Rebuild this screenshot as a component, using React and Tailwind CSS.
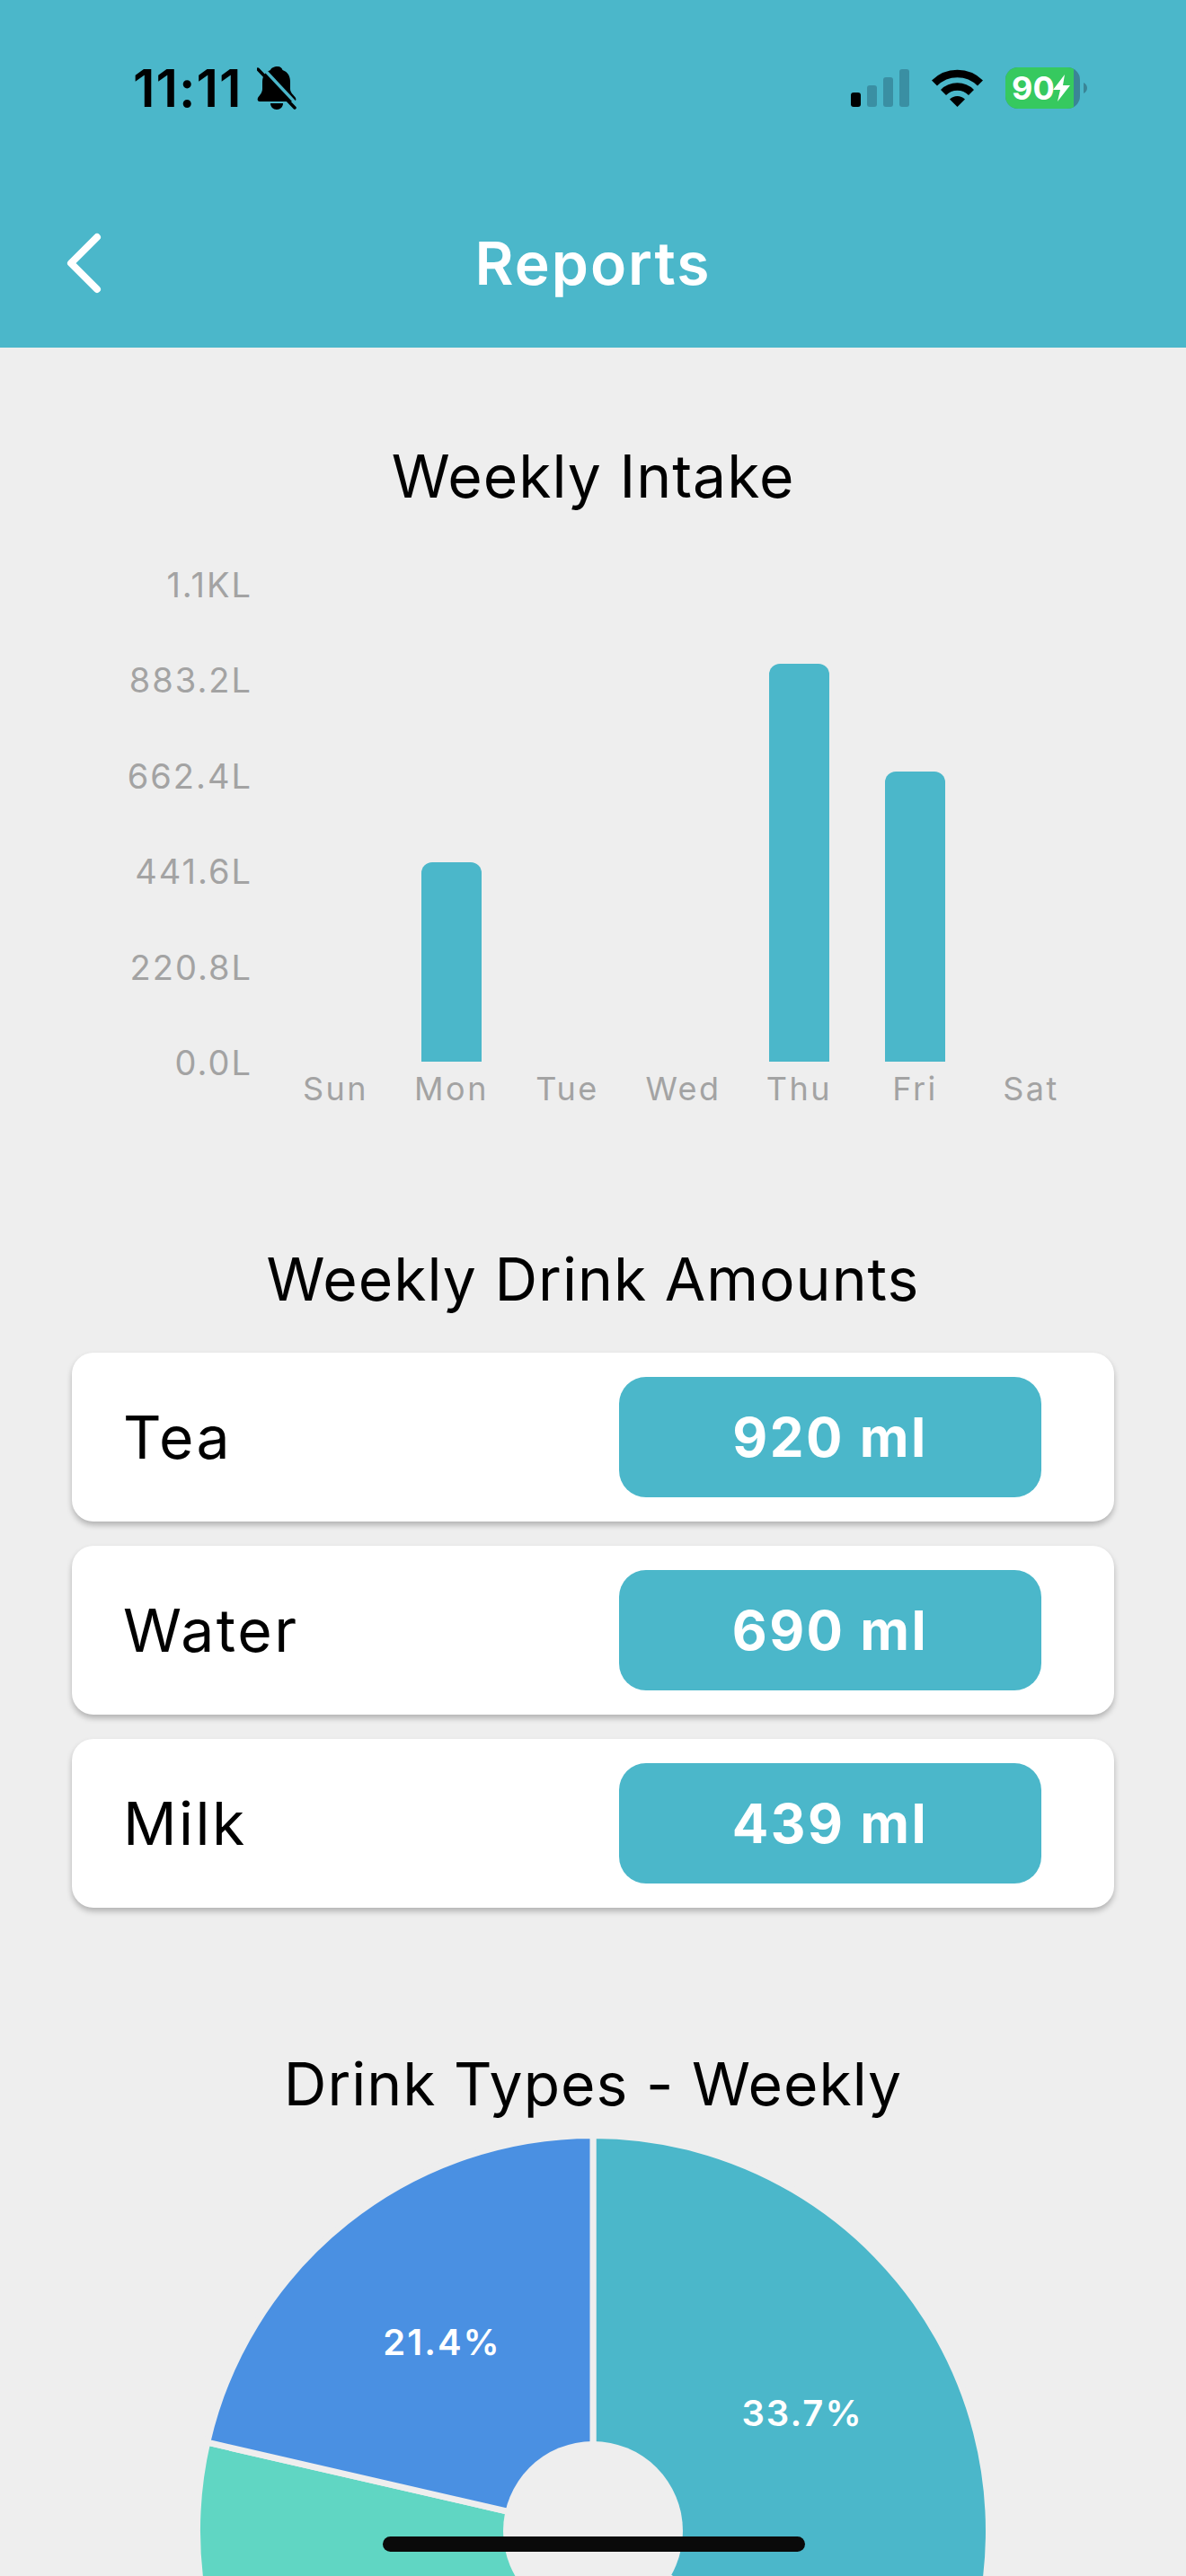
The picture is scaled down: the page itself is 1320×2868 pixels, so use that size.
import React from "react";

const R = 440.5;
function polar(a, r) {
  const t = (a * Math.PI) / 180;
  return [440 + r * Math.sin(t), 437 - r * Math.cos(t)];
}
function slice(a0, a1) {
  const [x0, y0] = polar(a0, R);
  const [x1, y1] = polar(a1, R);
  return `M440 437 L${x0} ${y0} A${R} ${R} 0 ${a1 - a0 > 180 ? 1 : 0} 1 ${x1} ${y1} Z`;
}

const yLabels = ["1.1KL", "883.2L", "662.4L", "441.6L", "220.8L", "0.0L"];
const days = [
  ["Sun", 0], ["Mon", 222], ["Tue", 0], ["Wed", 0], ["Thu", 443], ["Fri", 323], ["Sat", 0],
];
const drinks = [["Tea", "920 ml"], ["Water", "690 ml"], ["Milk", "439 ml"]];

function Bell() {
  return (
    <svg width="44" height="48" viewBox="0 0 44 48" className="ml-[16px] shrink-0">
      <path d="M23 0c3 0 5 2 5.5 4c6 2 8.500 7 8.500 13v8c0 4 4 7 6 10c1 2 0 4-2 4H3c-2 0-3-2-2-4c2-3 5-6 5-10v-8c0-6 3-11 9-13c.5-2 4-4 8-4z" fill="#000" />
      <path d="M15 41h14c0 4-3 7-7 7s-7-3-7-7z" fill="#000" />
      <path d="M4 -1L47 45" stroke="#4bb7ca" strokeWidth="3.500" />
      <path d="M1 3L42 46" stroke="#000" strokeWidth="3.500" strokeLinecap="round" />
    </svg>
  );
}

function Signal() {
  return (
    <div className="flex items-end gap-[7px] h-[42px]">
      <div className="w-[11px] h-[16px] rounded-[3px] bg-black" />
      <div className="w-[11px] h-[24px] rounded-[3px] bg-[#3a8fa3]" />
      <div className="w-[11px] h-[33px] rounded-[3px] bg-[#3a8fa3]" />
      <div className="w-[11px] h-[42px] rounded-[3px] bg-[#3a8fa3]" />
    </div>
  );
}

function Wifi() {
  return (
    <svg width="57" height="42" viewBox="0 0 57 42" className="ml-[25px]">
      <path d="M3 15.500A36 36 0 0 1 54 15.500" fill="none" stroke="#000" strokeWidth="8.500" />
      <path d="M13 26A22 22 0 0 1 44 26" fill="none" stroke="#000" strokeWidth="8.500" />
      <path d="M20 33.500A12 12 0 0 1 37 33.500L28.500 42Z" fill="#000" />
    </svg>
  );
}

function Battery() {
  return (
    <div className="ml-[25px] flex items-center gap-[4px]">
      <div className="w-[83px] h-[46px] rounded-[14px] bg-[#3a8596] overflow-hidden">
        <div className="w-[76px] h-full bg-[#36c95f] flex items-center pl-[7px] text-white text-[36px] font-bold leading-none">
          <span>90</span>
          <svg width="20" height="30" viewBox="0 0 20 30" className="-ml-[2px] shrink-0">
            <path d="M13 0L0 17h8L5 30L19 12h-8z" fill="#fff" />
          </svg>
        </div>
      </div>
      <svg width="4" height="12" viewBox="0 0 4 12">
        <path d="M0 0c2 1 4 3 4 6s-2 5-4 6z" fill="#3a8596" />
      </svg>
    </div>
  );
}

export default function App() {
  return (
    <div className="relative w-[1320px] h-[2868px] overflow-hidden bg-[#eeeeee] font-['Inter',sans-serif] text-black">
      <header className="h-[387px] bg-[#4bb7ca]">
        <div className="flex items-center justify-between pt-[75px] pl-[148px] pr-[110px] h-[121px]">
          <div className="flex items-center">
            <span className="text-[58px] font-semibold leading-none tracking-[1px]">11:11</span>
            <Bell />
          </div>
          <div className="flex items-center">
            <Signal />
            <Wifi />
            <Battery />
          </div>
        </div>
        <div className="mt-[132px] h-[80px] grid grid-cols-[1fr_auto_1fr] items-center">
          <div className="pl-[72px]">
            <svg width="44" height="68" viewBox="0 0 44 68" className="block">
              <path d="M36 5L7 34L36 63" fill="none" stroke="#fff" strokeWidth="8" strokeLinecap="round" strokeLinejoin="round" />
            </svg>
          </div>
          <h1 className="text-white text-[66px] font-semibold leading-none tracking-[2px]">Reports</h1>
          <div />
        </div>
      </header>

      <main>
        <h2 className="mt-[103px] h-[80px] flex items-center justify-center text-[66px] leading-none tracking-[1px]">Weekly Intake</h2>

        <section className="mt-[61px] flex pl-[120px]">
          <div className="w-[161px] h-[572px] flex flex-col justify-between text-[#a3a3a3] text-[38px] tracking-[2px] text-right">
            {yLabels.map((l) => (
              <div key={l} className="h-[40px] leading-[40px]">{l}</div>
            ))}
          </div>
          <div className="ml-[28px]">
            <div className="h-[551px] flex items-end">
              {days.map(([d, h]) => (
                <div key={d} className="w-[129px] flex justify-center">
                  {h > 0 && <div className="w-[67px] rounded-t-[12px] bg-[#4bb7ca]" style={{ height: h }} />}
                </div>
              ))}
            </div>
            <div className="flex h-[60px] items-center text-[#a3a3a3] text-[36px] tracking-[2.5px]">
              {days.map(([d]) => (
                <div key={d} className="w-[129px] text-center">{d}</div>
              ))}
            </div>
          </div>
        </section>

        <h2 className="mt-[142px] h-[80px] flex items-center justify-center text-[66px] leading-none tracking-[1px]">Weekly Drink Amounts</h2>

        <section className="mt-[42px] mx-[80px] flex flex-col gap-[27px]">
          {drinks.map(([name, value]) => (
            <div key={name} className="h-[188px] rounded-[24px] bg-white shadow-[0_4px_6px_rgba(0,0,0,0.25)] flex items-center justify-between pl-[57px] pr-[81px]">
              <span className="text-[66px] leading-none tracking-[2.5px]">{name}</span>
              <div className="w-[470px] h-[134px] rounded-[30px] bg-[#4bb7ca] flex items-center justify-center text-white text-[60px] font-bold tracking-[2.5px]">
                {value}
              </div>
            </div>
          ))}
        </section>

        <h2 className="mt-[156px] h-[80px] flex items-center justify-center text-[66px] leading-none tracking-[1px]">Drink Types - Weekly</h2>

        <section className="relative mt-[21px] mx-auto w-[880px] h-[880px]">
          <svg width="880" height="880" viewBox="0 0 880 880" className="block">
            <path d={slice(0, 121.32)} fill="#4bb7ca" stroke="#eeeeee" strokeWidth="7" />
            <path d={slice(121.32, 282.96)} fill="#60d6c3" stroke="#eeeeee" strokeWidth="7" />
            <path d={slice(282.96, 360)} fill="#4a90e2" stroke="#eeeeee" strokeWidth="7" />
            <circle cx="440" cy="437" r="100" fill="#eeeeee" />
          </svg>
          <span className="absolute left-[202px] top-[202px] w-[140px] text-center text-white text-[40px] leading-[50px] font-semibold tracking-[2px]">21.4%</span>
          <span className="absolute left-[603px] top-[281px] w-[140px] text-center text-white text-[40px] leading-[50px] font-semibold tracking-[2px]">33.7%</span>
        </section>
      </main>

      <div className="absolute left-[426px] top-[2824px] w-[470px] h-[17px] rounded-full bg-[#0a0a0a]" />
    </div>
  );
}
